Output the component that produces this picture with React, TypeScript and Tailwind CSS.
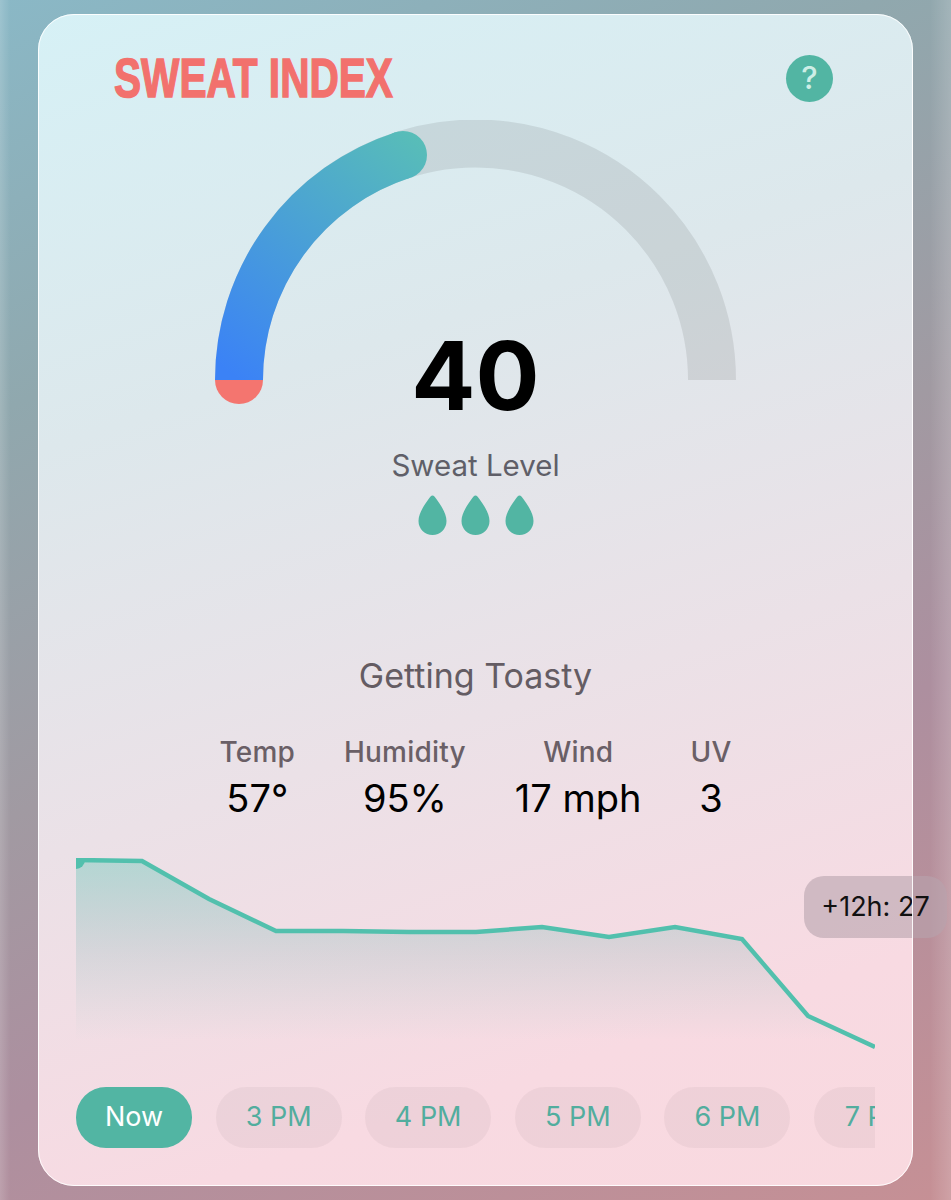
const stats = [
  { label: 'Temp', value: '57°' },
  { label: 'Humidity', value: '95%' },
  { label: 'Wind', value: '17 mph' },
  { label: 'UV', value: '3' },
];

const hours = ['3 PM', '4 PM', '5 PM', '6 PM', '7 PM'];

const linePoints =
  '76,860 142,861 209,899 276,931 343,931 409,932 476,932 542,927 609,937 675,927 742,939 808,1016 875,1047';

function Gauge() {
  return (
    <div className="relative mt-[18px] h-[284px] w-[521px] self-center">
      <svg width="521" height="284" viewBox="215 120 521 284" className="block">
        <defs>
          <linearGradient id="gaugeFill" gradientUnits="userSpaceOnUse" x1="239" y1="380" x2="420" y2="140">
            <stop offset="0" stopColor="#3b82f6" />
            <stop offset="1" stopColor="#58bdb8" />
          </linearGradient>
        </defs>
        <path d="M 239 380 A 236.5 236.5 0 0 1 712 380" fill="none" stroke="#000" strokeOpacity="0.085" strokeWidth="48" />
        <path d="M 215 380 A 24 24 0 0 0 263 380 Z" fill="#f4756f" />
        <path d="M 239 380 A 236.5 236.5 0 0 1 403 155" fill="none" stroke="url(#gaugeFill)" strokeWidth="48" />
        <circle cx="403" cy="155" r="24" fill="url(#gaugeFill)" />
      </svg>
      <div className="absolute left-0 right-0 top-[196px] text-center font-['Inter',sans-serif] text-[95px] font-bold leading-[120px] text-black">
        40
      </div>
    </div>
  );
}

function Drop() {
  return (
    <svg width="29" height="40" viewBox="0 0 29 40">
      <path
        d="M14.5 0.5 C13 0.5 12 2 11 3.5 C7 9 0.5 18 0.5 26 A14 14 0 0 0 28.5 26 C28.5 18 22 9 18 3.5 C17 2 16 0.5 14.5 0.5 Z"
        fill="#52b5a3"
      />
    </svg>
  );
}

function Chart() {
  return (
    <svg width="799" height="192" viewBox="76 858 799 192" className="mt-[37px] block">
      <defs>
        <linearGradient id="areaFill" x1="0" y1="0" x2="0" y2="1">
          <stop offset="0" stopColor="#4fc4b0" stopOpacity="0.36" />
          <stop offset="0.5" stopColor="#52a5a0" stopOpacity="0.15" />
          <stop offset="0.95" stopColor="#52bfae" stopOpacity="0" />
        </linearGradient>
      </defs>
      <polygon points={`${linePoints} 875,1050 76,1050`} fill="url(#areaFill)" />
      <polyline points={linePoints} fill="none" stroke="#52c0ad" strokeWidth="4.5" />
      <circle cx="76" cy="860" r="9" fill="#52c0ad" />
    </svg>
  );
}

export default function App() {
  return (
    <div className="h-[1200px] w-[951px] overflow-hidden bg-[linear-gradient(90deg,rgba(255,255,255,0.16)_0,rgba(255,255,255,0)_10px,rgba(255,255,255,0)_930px,rgba(255,255,255,0.16)_951px),linear-gradient(155deg,#8ab8c6_0%,#90a8ae_25%,#a19aa2_50%,#ad8f9f_68%,#c69095_100%)] pl-[38px] pt-[14px] font-['Inter',sans-serif]">
      <div className="relative flex h-[1172px] w-[875px] flex-col rounded-[36px] bg-[linear-gradient(162deg,#d6f1f6_0%,#dde8ec_30%,#ebe1e7_58%,#f8dae2_84%,#f9d9df_100%)] px-[38px] pt-[40px]">
        <div className="flex h-[48px] items-center justify-between pl-[38px] pr-[42px]">
          <h1 className="origin-left scale-x-[0.725] whitespace-nowrap font-['Liberation_Sans',sans-serif] text-[56px] font-bold leading-none text-[#f2716d] [-webkit-text-stroke:1.5px_#f2716d]">
            SWEAT INDEX
          </h1>
          <button className="flex h-[47px] w-[47px] items-center justify-center rounded-full bg-[#52b5a3] text-[31px] font-medium text-[#cdeee6]">
            ?
          </button>
        </div>

        <Gauge />

        <div className="mt-[44px] text-center text-[29.5px] leading-[34px] text-[#5f5f68]">Sweat Level</div>
        <div className="mt-[13px] flex justify-center gap-[14.5px]">
          <Drop />
          <Drop />
          <Drop />
        </div>

        <div className="mt-[120px] text-center text-[34px] leading-[42px] text-[#645c63]">Getting Toasty</div>

        <div className="mt-[39px] flex justify-center gap-[49px]">
          {stats.map((s) => (
            <div key={s.label} className="flex flex-col items-center">
              <div className="text-[28px] font-medium leading-[32px] tracking-[0.2px] text-[#6a5f66]">{s.label}</div>
              <div className="mt-[7px] whitespace-nowrap text-[38px] leading-[46px] text-black">{s.value}</div>
            </div>
          ))}
        </div>

        <Chart />

        <div className="mt-[37px] flex gap-[23.6px] overflow-hidden">
          <div className="flex h-[61px] w-[116px] shrink-0 items-center justify-center rounded-[30px] bg-[#52b5a3] text-[27px] text-white">
            Now
          </div>
          {hours.map((h) => (
            <div
              key={h}
              className="flex h-[61px] w-[126px] shrink-0 items-center justify-center rounded-[30px] bg-black/[0.04] text-[27px] text-[#52ad9e]"
            >
              {h}
            </div>
          ))}
        </div>

        <div className="absolute left-[766px] top-[862px] flex h-[62px] w-[143px] items-center justify-center rounded-[20px] bg-[#b8a4ae]/60 text-[27px] text-[#111]">
          +12h: 27
        </div>
        <div className="pointer-events-none absolute inset-0 rounded-[36px] border-[1.5px] border-white/90" />
      </div>
    </div>
  );
}
